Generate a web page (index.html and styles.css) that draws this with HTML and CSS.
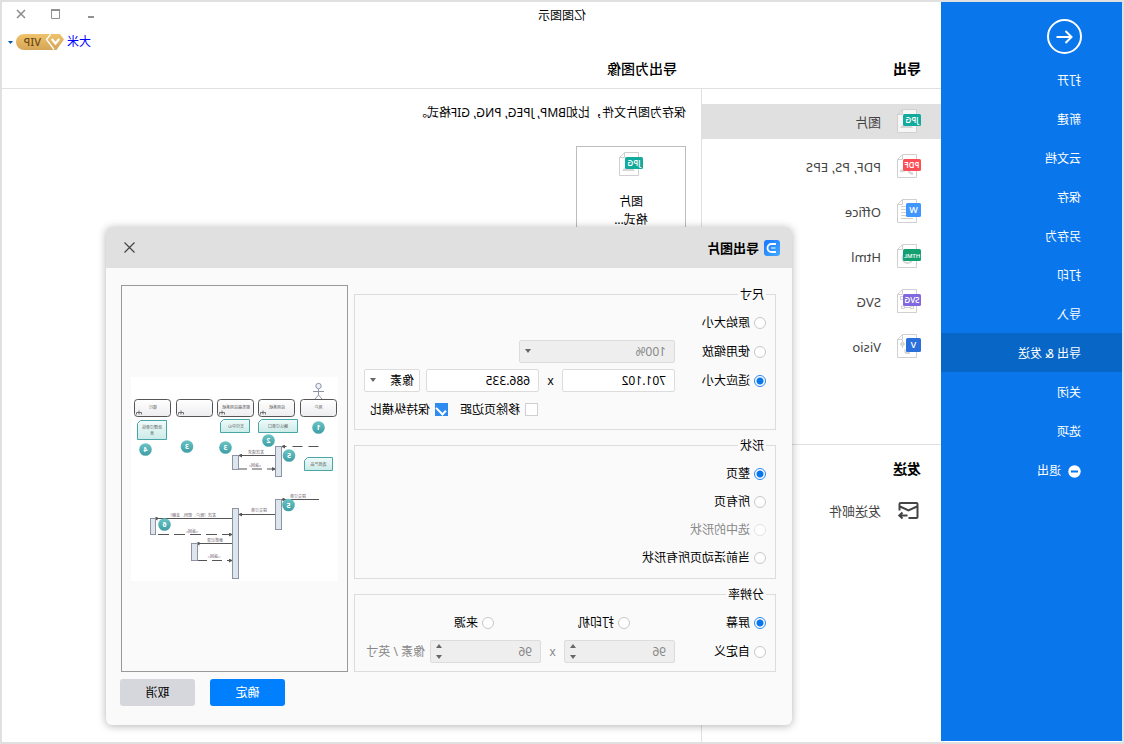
FILE: index.html
```html
<!DOCTYPE html>
<html lang="zh-CN">
<head>
<meta charset="utf-8">
<title>亿图图示</title>
<link rel="stylesheet" href="styles.css">
</head>
<body>
<div class="window">
  <nav class="sidebar">
    <button class="back" type="button" aria-label="返回">
      <svg width="35" height="35" viewBox="0 0 35 35" fill="none" stroke="#fff" stroke-width="2"><circle cx="17.5" cy="17.5" r="16.5"/><path d="M25.500 18H11M16.500 12l-6 6 6 6"/></svg>
    </button>
    <a class="nav-item" href="#">打开</a>
    <a class="nav-item" href="#">新建</a>
    <a class="nav-item" href="#">云文档</a>
    <a class="nav-item" href="#">保存</a>
    <a class="nav-item" href="#">另存为</a>
    <a class="nav-item" href="#">打印</a>
    <a class="nav-item" href="#">导入</a>
    <a class="nav-item active" href="#">导出 &amp; 发送</a>
    <a class="nav-item" href="#">关闭</a>
    <a class="nav-item" href="#">选项</a>
    <a class="nav-item" href="#"><svg width="13" height="13" viewBox="0 0 13 13"><circle cx="6.5" cy="6.5" r="6.2" fill="#fff"/><path d="M3 6.5h7" stroke="#0a76eb" stroke-width="2"/></svg>退出</a>
  </nav>

  <header class="titlebar">
    <h1 class="app-title">亿图图示</h1>
    <div class="controls">
      <button type="button" aria-label="最小化"><svg width="10" height="10" viewBox="0 0 10 10"><path d="M2 8h6" stroke="#919191" stroke-width="2"/></svg></button>
      <button type="button" aria-label="最大化"><svg width="10" height="10" viewBox="0 0 10 10" fill="none" stroke="#919191"><path d="M1.500 1v8.500h8V1"/><path d="M1 1h9" stroke-width="2"/></svg></button>
      <button type="button" aria-label="关闭窗口"><svg width="10" height="10" viewBox="0 0 10 10"><path d="M1 1l8 8M9 1l-8 8" stroke="#8a8a8a" stroke-width="1.5"/></svg></button>
    </div>
    <div class="account">
      <a href="#">大米</a>
      <svg width="48" height="16" viewBox="0 0 48 16">
        <defs><linearGradient id="gold" x1="0" y1="0" x2="0" y2="1"><stop offset="0" stop-color="#efc36d"/><stop offset="1" stop-color="#d6a558"/></linearGradient></defs>
        <path d="M13 0H40a8 8 0 0 1 0 16H10z" fill="url(#gold)"/>
        <path d="M4 0h10l4 5.500L9.500 16H7.500L0 5.500z" fill="url(#gold)"/>
        <path d="M13.500 .5l4 5-7.500 10" fill="none" stroke="#fff" stroke-width="1.300"/>
        <path d="M4.800 5l3.700 4.500L12.200 5" fill="none" stroke="#fff" stroke-width="2.200"/>
        <text class="vip" x="23" y="12">VIP</text>
      </svg>
      <svg width="5" height="3" viewBox="0 0 5 3"><path d="M0 0h5L2.500 3z" fill="#0055b3"/></svg>
    </div>
  </header>

  <h2 class="list-title">导出</h2>
  <h2 class="page-title">导出为图像</h2>

  <section class="list">
    <a class="row selected" href="#"><svg class="file" viewBox="0 0 25 25"><path class="sheet" d="M4.500 .5h14l5 5v18h-19zM18.500 .5v5h5"/><path d="M8 19l5-6 4 4 2-1 2 3z" fill="#d6d6d6"/><rect y="5" width="18" height="12" rx="1.500" fill="#12aa9c"/><text class="tag" x="9" y="14">JPG</text></svg>图片</a>
    <a class="row" href="#"><svg class="file" viewBox="0 0 25 25"><path class="sheet" d="M4.500 .5h14l5 5v18h-19zM18.500 .5v5h5"/><path d="M8 20c4-1 5-3 6-7 1 3 4 4 7 4" fill="none" stroke="#d6d6d6" stroke-width="2.500"/><rect y="5" width="18" height="12" rx="1.500" fill="#ff4d55"/><text class="tag" x="9" y="14">PDF</text></svg>PDF, PS, EPS</a>
    <a class="row" href="#"><svg class="file" viewBox="0 0 25 25"><path class="sheet" d="M4.500 .5h14l5 5v18h-19zM18.500 .5v5h5M8 7.500h12M8 10.500h12M8 13.500h12M8 16.500h12M8 19.500h12"/><rect y="4" width="15" height="14" rx="1.500" fill="#3f96ff"/><text class="tag letter" x="7.500" y="14">W</text></svg>Office</a>
    <a class="row" href="#"><svg class="file" viewBox="0 0 25 25"><path class="sheet" d="M4.500 .5h14l5 5v18h-19zM18.500 .5v5h5"/><circle cx="13.500" cy="14" r="5" fill="none" stroke="#d6d6d6" stroke-width="2"/><rect y="5" width="18" height="12" rx="1.500" fill="#12a072"/><text class="tag small" x="9" y="14">HTML</text></svg>Html</a>
    <a class="row" href="#"><svg class="file" viewBox="0 0 25 25"><path class="sheet" d="M4.500 .5h14l5 5v18h-19zM18.500 .5v5h5M7.500 17h3v2.500h-3zM16.500 17h3v2.500h-3zM10.500 18.500h6M17.500 7.500h3v3h-3z"/><rect y="5" width="18" height="12" rx="1.500" fill="#8268e0"/><text class="tag" x="9" y="14">SVG</text></svg>SVG</a>
    <a class="row" href="#"><svg class="file" viewBox="0 0 25 25"><path class="sheet" d="M4.500 .5h14l5 5v18h-19zM18.500 .5v5h5M12 19h4v-4M18.500 6v8"/><path d="M18.500 7l3 3-3 3-3-3zM11 17h5v3h-5z" fill="#d6d6d6"/><rect y="4" width="15" height="14" rx="1.500" fill="#2b70da"/><text class="tag letter" x="7.500" y="14">V</text></svg>Visio</a>
    <div class="send">
      <h2>发送</h2>
      <a class="row" href="#"><svg class="file" viewBox="0 0 25 25" fill="none" stroke="#444" stroke-width="2"><path d="M12.500 20H4.500a1 1 0 0 1-1-1V6a1 1 0 0 1 1-1h16a1 1 0 0 1 1 1v6.500M4 8.500l8.500 4L21 8.500M13.500 17.500h8M18.500 14.500l3.200 3-3.200 3"/></svg>发送邮件</a>
    </div>
  </section>

  <main class="content">
    <p>保存为图片文件，比如BMP, JPEG, PNG, GIF格式。</p>
    <button class="card" type="button">
      <svg class="file" viewBox="0 0 25 25"><path class="sheet" d="M4.500 .5h14l5 5v18h-19zM18.500 .5v5h5"/><path d="M8 19l5-6 4 4 2-1 2 3z" fill="#d6d6d6"/><rect y="5" width="18" height="12" rx="1.500" fill="#12aa9c"/><text class="tag" x="9" y="14">JPG</text></svg>
      <span>图片<br>格式...</span>
    </button>
  </main>

  <section class="dialog" role="dialog" aria-labelledby="dialog-title">
    <header class="dialog-head">
      <svg width="16" height="16" viewBox="0 0 16 16"><defs><linearGradient id="logo" x1="0" y1="1" x2="1" y2="0"><stop offset="0" stop-color="#45aaff"/><stop offset="1" stop-color="#1676ff"/></linearGradient></defs><rect width="16" height="16" rx="3" fill="url(#logo)"/><path d="M4 4h4.500a4 4 0 0 1 0 8H4" fill="none" stroke="#fff" stroke-width="1.800"/><path d="M4.500 8H9" stroke="#b5dcff" stroke-width="1.500"/></svg>
      <h2 id="dialog-title">导出图片</h2>
      <button type="button" aria-label="关闭"><svg width="11" height="11" viewBox="0 0 11 11"><path d="M.5.5l10 10M10.500.5l-10 10" stroke="#444" stroke-width="1.200"/></svg></button>
    </header>
    <form class="dialog-body">
      <div class="options">
        <fieldset class="size">
          <legend>尺寸</legend>
          <div class="line"><label class="choice"><input type="radio" name="size">原始大小</label></div>
          <div class="line">
            <label class="choice"><input type="radio" name="size">使用缩放</label>
            <span class="combo wide"><select disabled aria-label="缩放"><option>100%</option></select></span>
          </div>
          <div class="line">
            <label class="choice"><input type="radio" name="size" checked>适应大小</label>
            <input class="field" type="text" value="701.102" aria-label="宽度">
            <span class="times">x</span>
            <input class="field" type="text" value="686.335" aria-label="高度">
            <span class="combo unit"><select aria-label="单位"><option>像素</option></select></span>
          </div>
          <div class="line checks">
            <label><input type="checkbox">移除页边距</label>
            <label><input type="checkbox" checked>保持纵横比</label>
          </div>
        </fieldset>
        <fieldset class="shape">
          <legend>形状</legend>
          <label class="choice"><input type="radio" name="shape" checked>整页</label>
          <label class="choice"><input type="radio" name="shape">所有页</label>
          <label class="choice off"><input type="radio" name="shape" disabled>选中的形状</label>
          <label class="choice"><input type="radio" name="shape">当前活动页所有形状</label>
        </fieldset>
        <fieldset class="resolution">
          <legend>分辨率</legend>
          <div class="line thirds">
            <label class="choice"><input type="radio" name="dpi" checked>屏幕</label>
            <label class="choice"><input type="radio" name="dpi">打印机</label>
            <label class="choice"><input type="radio" name="dpi">来源</label>
          </div>
          <div class="line">
            <label class="choice"><input type="radio" name="dpi">自定义</label>
            <span class="spin"><input type="number" value="96" disabled aria-label="水平分辨率"></span>
            <span class="times off">x</span>
            <span class="spin"><input type="number" value="96" disabled aria-label="垂直分辨率"></span>
            <span class="unit-text">像素 / 英寸</span>
          </div>
        </fieldset>
      </div>
      <div class="side">
        <div class="preview">
          <svg viewBox="0 0 207 204" role="img" aria-label="预览">
            <defs>
              <linearGradient id="lane" x1="0" y1="0" x2="0" y2="1"><stop offset="0" stop-color="#fff"/><stop offset="1" stop-color="#ededf0"/></linearGradient>
              <linearGradient id="note" x1="0" y1="0" x2="0" y2="1"><stop offset="0" stop-color="#f0fbfa"/><stop offset="1" stop-color="#cbebe8"/></linearGradient>
              <linearGradient id="ball" x1="0" y1="0" x2="0" y2="1"><stop offset="0" stop-color="#6bc4c5"/><stop offset="1" stop-color="#3d9ea4"/></linearGradient>
              <marker id="tip" viewBox="0 0 4 4" refX="3.500" refY="2" markerWidth="4" markerHeight="4" markerUnits="userSpaceOnUse" orient="auto"><path d="M0 0l4 2-4 2z" fill="#555"/></marker>
              <g id="fork" fill="none" stroke="#555" stroke-width=".8"><path d="M-2.500 2V0h5v2M0 2v-4"/></g>
            </defs>
            <rect width="207" height="204" fill="#fff"/>
            <g fill="#eef1f8" stroke="#8d95a6"><circle cx="19.500" cy="9" r="2.700"/><path fill="none" d="M19.500 12v6M14 14.500h11M16 22l3.500-4 3.500 4"/></g>
            <g fill="url(#lane)" stroke="#555">
              <rect x="1.500" y="22.500" width="36" height="17" rx="3"/><rect x="43.500" y="22.500" width="36" height="17" rx="3"/><rect x="84.500" y="22.500" width="36" height="17" rx="3"/><rect x="125.500" y="22.500" width="36" height="17" rx="3"/><rect x="167.500" y="22.500" width="36" height="17" rx="3"/>
            </g>
            <use href="#fork" x="75" y="35.500"/><use href="#fork" x="116" y="35.500"/><use href="#fork" x="157" y="35.500"/><use href="#fork" x="199" y="35.500"/>
            <g fill="url(#note)" stroke="#4aa5a8">
              <path d="M40.500 42.500h36l3 3v10h-39z"/><path d="M88.500 42.500h26l3 3v10h-29z"/><path d="M171.500 43.500h26l3 3v16h-29z"/><path d="M5.500 80.500h25l3 3v10h-28z"/>
            </g>
            <g fill="none" stroke="#555" marker-end="url(#tip)">
              <path d="M62.500 78.500H99.500"/><path d="M19 122.500H57"/><path d="M62.500 137.500H99.500"/><path d="M105.500 141.500H184"/><path d="M105.500 166.500H142"/>
              <path stroke-dasharray="10 6" d="M19.500 69.500H56.500"/><path stroke-dasharray="10 5" d="M101 92H62.500"/><path stroke-dasharray="11 5" d="M180 157.500H105.500"/><path stroke-dasharray="10 5" d="M141 183.500H105.500"/>
            </g>
            <g fill="#dfe5ec" stroke="#8c93a3">
              <rect x="56.500" y="69.500" width="6" height="30"/><rect x="99.500" y="78.500" width="6" height="14"/><rect x="56.500" y="122.500" width="6" height="30"/><rect x="99.500" y="131.500" width="6" height="70"/><rect x="182.500" y="141.500" width="5" height="16"/><rect x="140.500" y="166.500" width="6" height="17"/>
            </g>
            <g fill="url(#ball)"><circle cx="19.500" cy="50.500" r="6.300"/><circle cx="69.500" cy="63.500" r="6.300"/><circle cx="112.500" cy="70.500" r="6.300"/><circle cx="151" cy="69.500" r="6.300"/><circle cx="192.500" cy="72.500" r="6.300"/><circle cx="49" cy="78.500" r="6.300"/><circle cx="49.500" cy="128" r="6.300"/><circle cx="173.500" cy="147.500" r="6.300"/></g>
            <g class="num"><text x="19.500" y="53">1</text><text x="69.500" y="66">2</text><text x="112.500" y="73">3</text><text x="151" y="72">3</text><text x="192.500" y="75">4</text><text x="49" y="81">5</text><text x="49.500" y="131">5</text><text x="173.500" y="150">6</text></g>
            <g class="tiny"><text x="19.500" y="32">用户</text><text x="61" y="32">应用系统</text><text x="102" y="32">服务器应用系统</text><text x="185" y="32">银行</text><text x="60" y="51">确认订单口</text><text x="102" y="51">支付中心</text><text x="186" y="52">处理订单信</text><text x="186" y="58">息</text><text x="19.500" y="89">选择产品</text></g>
            <g class="tiny msg"><text x="82" y="77">发送请求</text><text x="83" y="90">«返回»</text><text x="40" y="121">提交订单</text><text x="79" y="135">提交订单</text><text x="146" y="140">发送（账户、密码、金额）</text><text x="146" y="156">«返回»</text><text x="123" y="165">更新记录</text><text x="124" y="181">‹‹返回››</text></g>
          </svg>
        </div>
        <div class="actions">
          <button class="ok" type="button">确定</button>
          <button class="cancel" type="button">取消</button>
        </div>
      </div>
    </form>
  </section>
</div>
</body>
</html>
```
FILE: styles.css
```css
* { box-sizing: border-box; }
body {
  margin: 0;
  background: #fff;
  color: #000;
  font: 12px/18px "Noto Sans", "Noto Sans CJK SC", sans-serif;
  font-kerning: none;
}
h1, h2, p { margin: 0; font-size: inherit; font-weight: normal; }
a { color: inherit; text-decoration: none; }
button, input, select { font: inherit; color: inherit; margin: 0; }
button { border: 0; padding: 0; background: none; display: flex; align-items: center; justify-content: center; }
svg { display: block; flex: none; }

/* The whole interface is shown flipped left to right. */
.window {
  transform: scaleX(-1);
  position: relative;
  min-height: 100vh;
  border: 2px solid #e0e0e0;
  background: #fff;
  display: grid;
  grid-template-columns: 181px 240px 1fr;
  grid-template-rows: 87px 1fr;
}

.sidebar {
  grid-area: 1 / 1 / 3 / 2;
  margin-bottom: 1px;
  padding-top: 17px;
  background: #0a76eb;
  color: #fff;
}
.back { margin: 0 0 6px 40px; }
.nav-item { display: flex; align-items: center; gap: 7px; height: 39px; padding: 3px 0 0 41px; }
.nav-item.active { background: #0766c6; }

.titlebar {
  grid-area: 1 / 2 / 2 / 4;
  display: flex;
  flex-direction: column;
  align-items: flex-end;
  gap: 8px;
}
.app-title { position: absolute; left: 0; right: 0; top: 5px; text-align: center; }
.controls { position: relative; display: flex; gap: 25px; padding: 6px 14px 0 0; }
.controls button { width: 10px; height: 12px; }
.account { position: relative; display: flex; align-items: center; gap: 3px; height: 28px; padding-right: 6px; color: #00f; }
.vip { font: 500 11px "Noto Sans", sans-serif; fill: #6b4a12; }

.list-title, .page-title { align-self: end; height: 31px; font-size: 14px; line-height: 22px; }
.list-title { grid-area: 1 / 2; padding-left: 20px; font-weight: bold; border-bottom: 1px solid #e0e0e0; }
.page-title { grid-area: 1 / 3; padding-left: 24px; font-weight: 500; border-bottom: 1px solid #e0e0e0; }

.list { grid-area: 2 / 2; padding-top: 15px; border-right: 1px solid #e0e0e0; font-size: 13px; color: #444; }
.row { display: flex; align-items: center; gap: 15px; height: 35px; margin-bottom: 10px; padding-left: 20px; }
.row.selected { background: #e0e0e0; }
.file { width: 25px; height: 25px; }
.sheet { fill: #fff; stroke: #d0d0d0; }
.selected .sheet { fill: #f6f6f6; }
.tag { font: 600 8px "Open Sans", "Noto Sans", sans-serif; fill: #fff; text-anchor: middle; }
.tag.small { font-size: 6px; }
.tag.letter { font-size: 9px; }
.send { margin-top: 80px; border-top: 1px solid #e0e0e0; }
.send h2 { padding: 13px 0 13px 20px; font-size: 14px; line-height: 22px; font-weight: bold; color: #000; }

.content { grid-area: 2 / 3; padding: 15px; }
.card {
  flex-direction: column;
  justify-content: flex-start;
  gap: 16px;
  width: 110px;
  height: 110px;
  margin-top: 24px;
  padding-top: 5px;
  border: 1px solid #bdbdbd;
}

.dialog {
  position: absolute;
  left: 330px;
  top: 225px;
  width: 686px;
  border-radius: 6px;
  background: #fafafa;
  box-shadow: 0 1px 8px rgba(0, 0, 0, .3);
}
.dialog-head {
  display: flex;
  align-items: center;
  gap: 5px;
  height: 41px;
  padding: 0 18px 0 12px;
  border-radius: 6px 6px 0 0;
  background: #e0e0e0;
}
.dialog-head h2 { flex: 1; font-size: 13px; font-weight: bold; }
.dialog-body { display: flex; gap: 6px; padding: 17px 14px 19px 16px; }
.options { flex: 1; min-width: 0; display: flex; flex-direction: column; gap: 7px; padding-top: 1px; }
.side { width: 228px; display: flex; flex-direction: column; gap: 7px; }

fieldset {
  min-width: 0;
  margin: 0;
  padding: 8px 9px;
  border: 1px solid #dcdcdc;
  display: flex;
  flex-direction: column;
  gap: 6px;
}
legend { padding: 0 2px; line-height: 17px; }
.shape { padding-top: 9px; padding-bottom: 9px; }
.line { display: flex; align-items: center; height: 23px; }
.choice { display: flex; align-items: center; gap: 4px; height: 22px; }
.line > .choice { flex: 0 0 91px; }
.thirds > .choice { flex-basis: 136px; }
.off, .unit-text { color: #888; }

input[type="radio"] {
  appearance: none;
  width: 12px;
  height: 12px;
  border: 1px solid #c8c8c8;
  border-radius: 50%;
  background: #fff;
}
input[type="radio"]:checked { border-color: #2d87ef; background: radial-gradient(circle, #0a76eb 0 3px, #fff 4px); }
input[type="radio"]:disabled { border-color: #e4e4e4; }
input[type="checkbox"] { appearance: none; width: 13px; height: 13px; border: 1px solid #d0d0d0; background: #fff; }
input[type="checkbox"]:checked {
  border: 0;
  background: #2e8cf0;
  display: grid;
  place-items: center;
}
input[type="checkbox"]:checked::after {
  content: "";
  width: 4px;
  height: 8px;
  border: solid #fff;
  border-width: 0 2px 2px 0;
  transform: rotate(45deg);
}
.checks { padding-left: 228px; gap: 12px; }
.checks label { display: flex; align-items: center; gap: 5px; white-space: nowrap; }

.field, select, .spin input {
  appearance: none;
  width: 100%;
  height: 23px;
  padding: 0 8px;
  border: 1px solid #dcdcdc;
  border-radius: 2px;
  background: #fff;
  outline: 0;
}
.field { width: 113px; }
select:disabled, .spin input:disabled { background: #eee; color: #888; opacity: 1; }
.times { width: 23px; text-align: center; }
.combo, .spin { position: relative; }
.combo.wide { width: 156px; }
.combo.unit { width: 56px; margin-left: 6px; }
.combo.unit select { padding: 0 5px; }
.combo::after, .spin::before, .spin::after {
  content: "";
  position: absolute;
  right: 6px;
  border: 3px solid transparent;
}
.combo::after { top: 9px; border-top: 4px solid #666; border-bottom: 0; }
.spin { width: 111px; }
.spin input { appearance: textfield; }
.spin input::-webkit-inner-spin-button { appearance: none; }
.spin::before { top: 4px; z-index: 1; border-bottom: 4px solid #666; border-top: 0; }
.spin::after { bottom: 4px; border-top: 4px solid #666; border-bottom: 0; }
.unit-text { margin-left: 5px; white-space: nowrap; }

.preview {
  display: flex;
  justify-content: center;
  width: 227px;
  height: 387px;
  padding: 91px 0 0;
  border: 1px solid #999;
}
.preview svg { width: 207px; height: 204px; }
.num { font: bold 7px "Noto Sans", sans-serif; fill: #fff; text-anchor: middle; }
.tiny { font-size: 4px; fill: #555; text-anchor: middle; }
.msg { fill: #6a5a6a; }

.actions { display: flex; justify-content: flex-end; gap: 15px; }
.actions button { width: 75px; height: 27px; border-radius: 3px; }
.ok { background: #0080ff; color: #fff; }
.cancel { background: #d5d7dc; }
```
